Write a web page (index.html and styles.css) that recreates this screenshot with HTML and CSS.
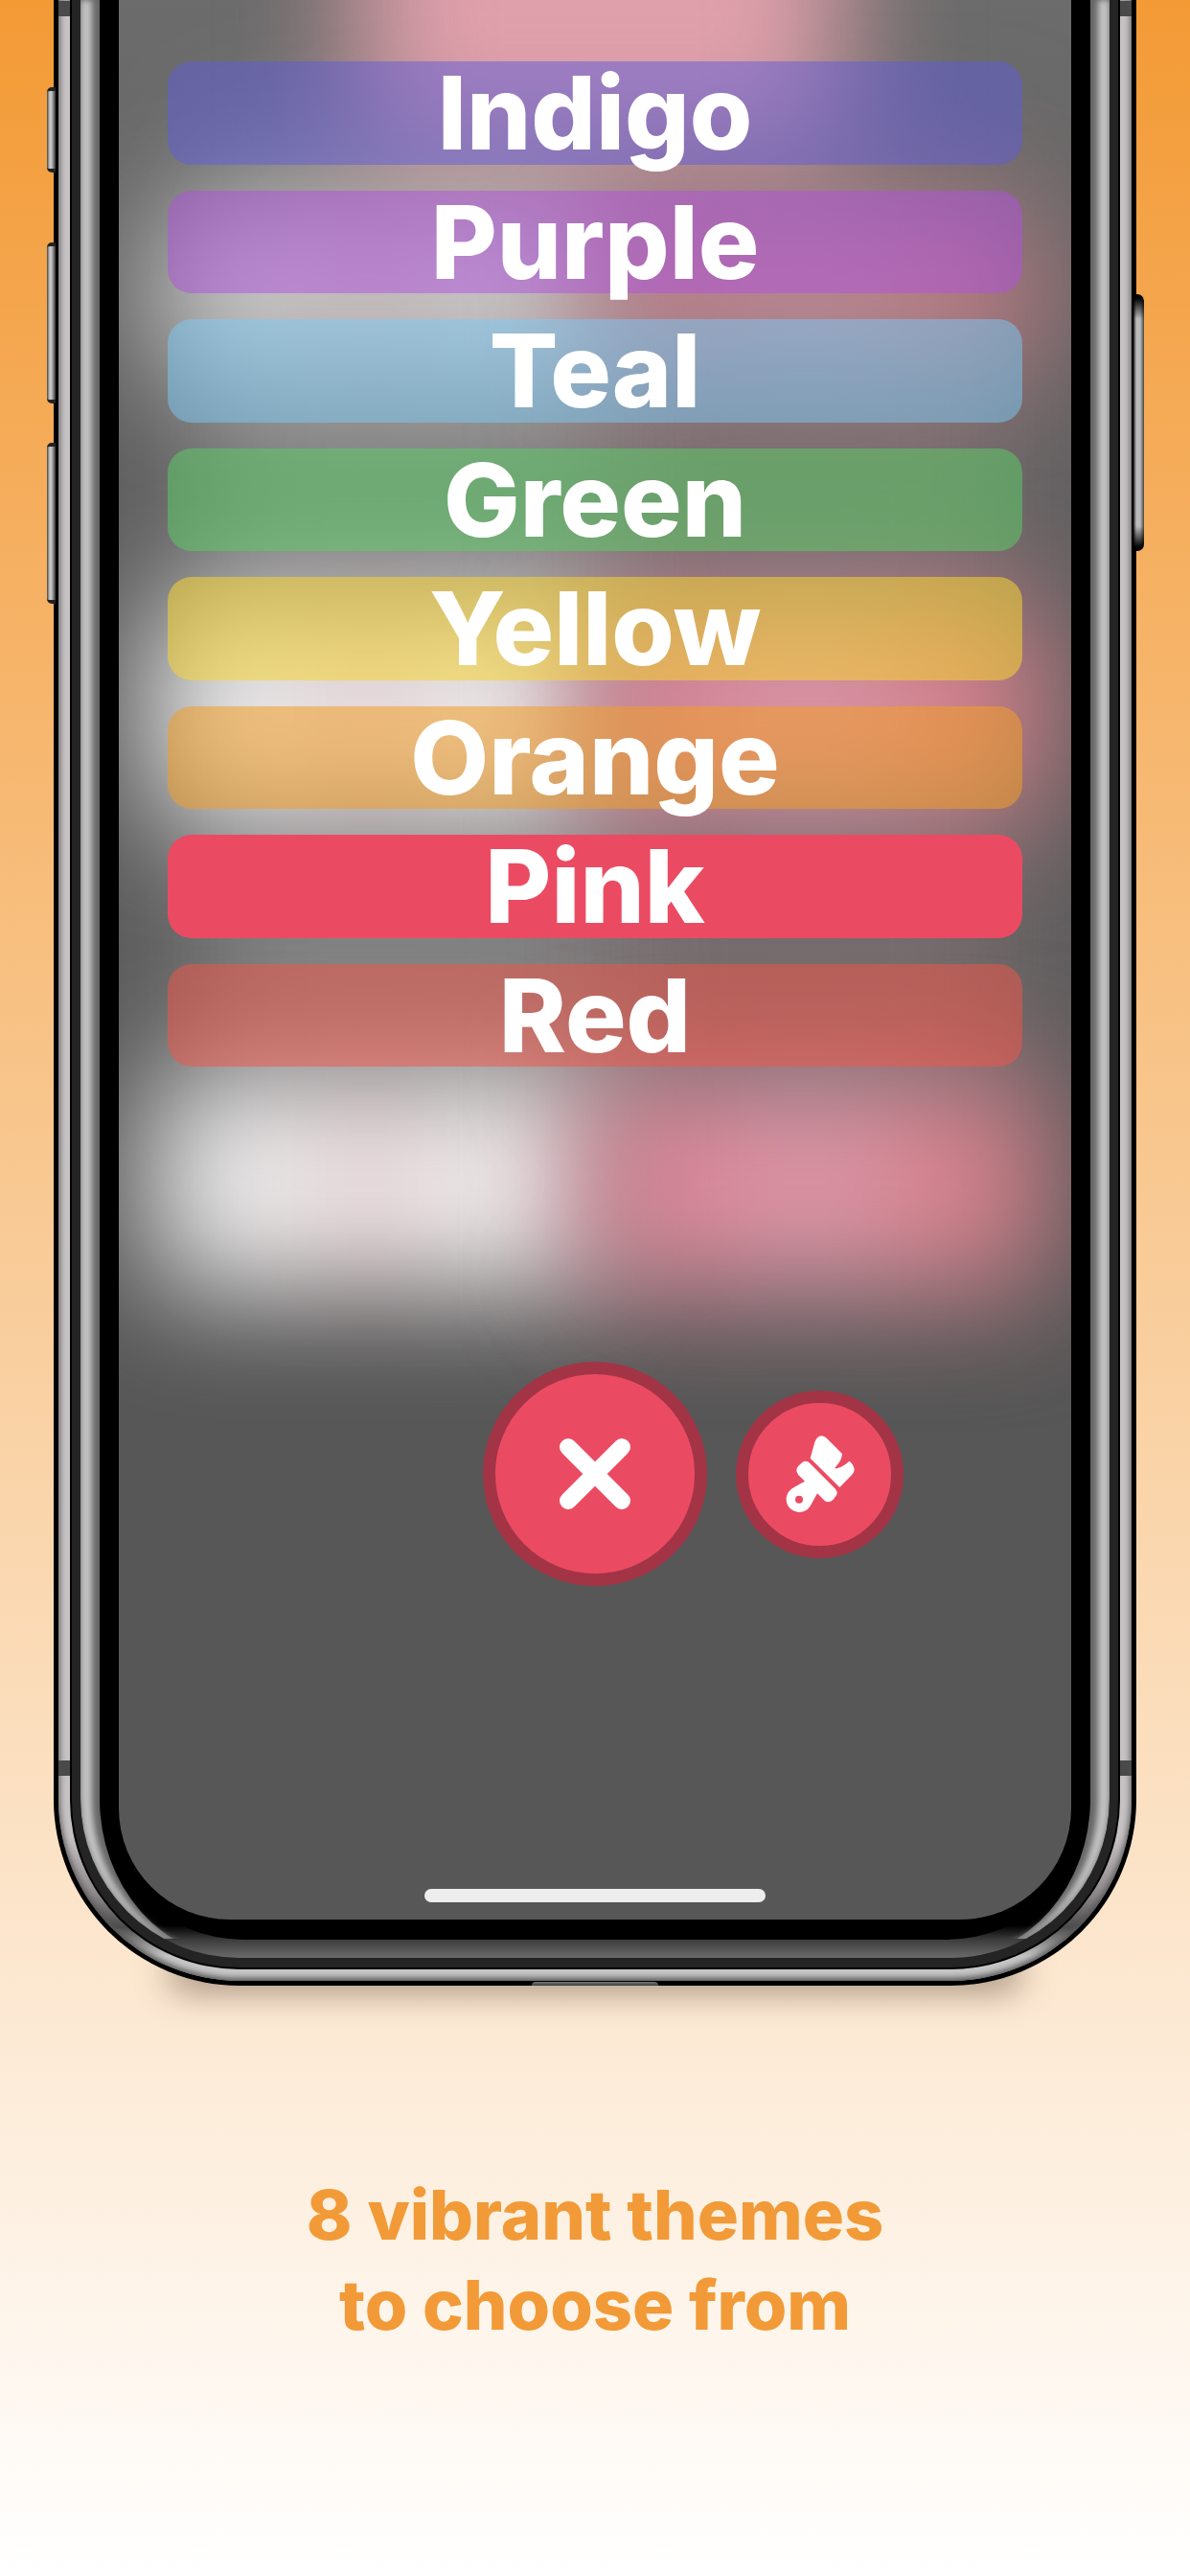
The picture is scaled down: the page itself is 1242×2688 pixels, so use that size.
FILE: index.html
```html
<!DOCTYPE html>
<html lang="en">
<head>
<meta charset="utf-8">
<meta name="viewport" content="width=device-width, initial-scale=1">
<title>Themes</title>
<link rel="stylesheet" href="styles.css">
</head>
<body>
<main class="promo">
  <section class="phone">
    <span class="key key-mute"></span>
    <span class="key key-up"></span>
    <span class="key key-down"></span>
    <span class="key key-power"></span>
    <div class="rim">
      <span class="antenna antenna-top"></span>
      <span class="antenna antenna-bottom"></span>
      <div class="band">
        <div class="bevel">
          <div class="bezel">
            <div class="screen">
              <div class="backdrop" aria-hidden="true">
                <span class="glow smudge"></span>
                <span class="glow smudge-rose"></span>
                <span class="glow glow-title"></span>
                <span class="glow glow-a light"></span>
                <span class="glow glow-a rose"></span>
                <span class="glow glow-b light"></span>
                <span class="glow glow-b rose"></span>
                <span class="glow glow-c light"></span>
                <span class="glow glow-c rose"></span>
              </div>
              <div class="themes">
                <button class="theme indigo" type="button">Indigo</button>
                <button class="theme purple" type="button">Purple</button>
                <button class="theme teal" type="button">Teal</button>
                <button class="theme green" type="button">Green</button>
                <button class="theme yellow" type="button">Yellow</button>
                <button class="theme orange" type="button">Orange</button>
                <button class="theme pink" type="button">Pink</button>
                <button class="theme red" type="button">Red</button>
              </div>
              <div class="actions">
                <button class="round round-large" type="button" aria-label="Close">
                  <svg width="76" height="76" viewBox="0 0 76 76"><path d="M10 10 66 66M66 10 10 66" stroke="#fff" stroke-width="18" stroke-linecap="round"/></svg>
                </button>
                <button class="round round-small" type="button" aria-label="Themes">
                  <svg width="72" height="80" viewBox="1014 328 216 240" fill="#fff"><path d="M1091 399 1105 349Q1112 330 1126 329 1134 329 1140 334L1191 385Q1190 402 1180 414 1168 428 1168 430 1170 432 1176 430 1195 425 1213 408 1226 416 1229 434 1229 443 1222 450L1183 490Z"/><path fill-rule="evenodd" d="M1053 424 1063 414Q1075 404 1087 412L1170 495Q1178 505 1173 515L1163 528Q1150 540 1137 533L1113 509Q1106 522 1092 547 1080 568 1056 568 1040 567 1028 556 1015 543 1016 524 1018 507 1031 496 1045 486 1074 471L1053 450Q1043 437 1053 424ZM1044 528A12 12 0 1 0 1068 528 12 12 0 1 0 1044 528Z"/></svg>
                </button>
              </div>
              <div class="home-bar"></div>
            </div>
          </div>
        </div>
      </div>
    </div>
    <span class="notch"></span>
  </section>
  <h1 class="caption">8 vibrant themes<br>to choose from</h1>
</main>
</body>
</html>
```

FILE: styles.css
```css
* {
  box-sizing: border-box;
}

body {
  margin: 0;
  font-family: Inter, "Open Sans", sans-serif;
}

.promo {
  position: relative;
  z-index: 0;
  min-height: 100vh;
  background: linear-gradient(#f39a35, #fff);
}

/* Phone body: nested shells from the outer edge to the glass */
.phone {
  position: relative;
  margin: 0 56px;
  padding: 0 5px 5px;
  background: #000;
  border-radius: 0 0 194px 194px;
}

.phone::before {
  content: "";
  position: absolute;
  left: 120px;
  right: 120px;
  bottom: -6px;
  height: 40px;
  border-radius: 20px;
  background: rgba(60, 40, 25, 0.45);
  filter: blur(18px);
  z-index: -1;
}

.rim {
  position: relative;
  padding: 0 12px 12px;
  border-radius: 0 0 189px 189px;
  background: linear-gradient(0deg, #c6c6c6 26px, #4c4c4c 56px, #8d8889 90px, #c6c1c2 150px);
  box-shadow: inset 0 -2px 6px 1px #555;
}

.antenna {
  position: absolute;
  left: 0;
  right: 0;
  height: 16px;
  background: #4a4a4a;
}

.antenna-top {
  top: 1px;
}

.antenna-bottom {
  bottom: 214px;
}

.band {
  position: relative;
  padding: 0 9px 10px;
  background: #242424;
  border: solid #000;
  border-width: 0 2px 2px;
  border-radius: 0 0 177px 177px;
}

.bevel {
  position: relative;
  overflow: hidden;
  padding: 0 20px 19px;
  border-radius: 0 0 166px 166px;
  background: linear-gradient(0deg, #6a6a6a, #3c3c3c 19px, #000 34px);
}

/* Side highlights that thin out towards the bottom corners */
.bevel::before,
.bevel::after {
  content: "";
  position: absolute;
  inset: 0;
  border: solid #666;
  border-width: 0 20px;
  border-radius: 0 0 166px 166px;
  clip-path: inset(0 0 20px);
}

.bevel::after {
  border-color: #c4c4c4;
  border-width: 0 12px;
  filter: blur(3px);
}

.bezel {
  position: relative;
  z-index: 1;
  padding: 0 20px 21px;
  background: #000;
  border-radius: 0 0 150px 150px;
}

.screen {
  position: relative;
  overflow: hidden;
  padding: 64px 51px 18px;
  border-radius: 0 0 116px 116px;
  background: linear-gradient(#6c6c6c, #5e5e5e 500px, #5a5a5a 1150px, #575757 1450px);
}

.key {
  position: absolute;
  left: -7px;
  width: 9px;
  border-radius: 5px 0 0 5px;
  border: solid #222;
  border-width: 4px 0;
  background: linear-gradient(90deg, #444, #ccc 3px, #bbb 5px, #333);
}

.key-mute {
  top: 91px;
  height: 89px;
}

.key-up {
  top: 253px;
  height: 168px;
}

.key-down {
  top: 462px;
  height: 168px;
}

.key-power {
  left: auto;
  right: -8px;
  top: 307px;
  width: 11px;
  height: 268px;
  border: 0;
  border-radius: 0 7px 7px 0;
  background:
    linear-gradient(#000 4px, transparent 26px, transparent calc(100% - 26px), #000 calc(100% - 4px)),
    linear-gradient(90deg, #222, #bbb 3px, #bbb 7px, #444);
}

.notch {
  position: absolute;
  left: calc(50% - 66px);
  bottom: 0;
  width: 132px;
  height: 4px;
  border-radius: 12px 12px 0 0;
  background: linear-gradient(#777, #3c3c3c);
}

/* Out-of-focus game board behind the menu */
.backdrop,
.glow {
  position: absolute;
}

.backdrop {
  inset: 0;
}

.glow {
  filter: blur(64px);
}

.glow-title {
  left: 25%;
  right: 24%;
  top: -160px;
  height: 325px;
  background: #e0a0ab;
}

.light {
  left: 4%;
  right: 50%;
  background: linear-gradient(90deg, #f0f0f0 30%, #e8cdd1 48%, #f2f0f0 66%);
}

.rose {
  left: 49%;
  right: 3%;
  background: linear-gradient(90deg, #dc8496 20%, #e09cae 50%, #d87f8a 80%);
}

.glow-a {
  top: 235px;
  height: 145px;
  opacity: 0.75;
}

.glow-b {
  top: 635px;
  height: 215px;
}

.glow-c {
  top: 1127px;
  height: 215px;
}

.smudge {
  left: 8%;
  right: 48%;
  top: 130px;
  height: 1180px;
  background: rgba(255, 255, 255, 0.23);
}

.smudge-rose {
  left: 50%;
  right: 5%;
  top: 150px;
  height: 1200px;
  background: rgba(185, 150, 158, 0.28);
}

.themes {
  position: relative;
  display: flex;
  flex-direction: column;
  gap: 27px;
  min-height: 1049px;
}

.theme {
  flex: 1 0 107px;
  display: flex;
  align-items: center;
  justify-content: center;
  padding: 0;
  border: 0;
  border-radius: 25px;
  color: #fff;
  font: 800 106px/107px Inter, "Open Sans", sans-serif;
}

.indigo { background: rgba(96, 92, 218, 0.5); }
.purple { background: rgba(175, 82, 222, 0.5); }
.teal { background: rgba(124, 202, 245, 0.5); }
.green { background: rgba(92, 205, 102, 0.52); }
.yellow { background: rgba(247, 212, 52, 0.54); }
.orange { background: rgba(241, 158, 42, 0.55); }
.pink { background: #eb4b62; }
.red { background: rgba(240, 86, 72, 0.52); }

.actions {
  position: relative;
  display: grid;
  grid-template-columns: 1fr auto 1fr;
  align-items: center;
  gap: 30px;
  margin-top: 308px;
}

.round {
  display: grid;
  place-items: center;
  padding: 0;
  border: 13px solid #a33446;
  border-radius: 50%;
  background: #eb4b62;
}

.round-large {
  grid-column: 2;
  width: 234px;
  height: 234px;
}

.round-small {
  width: 175px;
  height: 175px;
}

.home-bar {
  position: relative;
  width: 40%;
  height: 14px;
  margin: 316px auto 0;
  border-radius: 7px;
  background: #ededed;
}

.caption {
  margin: 0;
  padding: 192px 40px 200px;
  text-align: center;
  color: #f29a37;
  font-size: 72px;
  line-height: 94px;
  font-weight: 800;
}
```
